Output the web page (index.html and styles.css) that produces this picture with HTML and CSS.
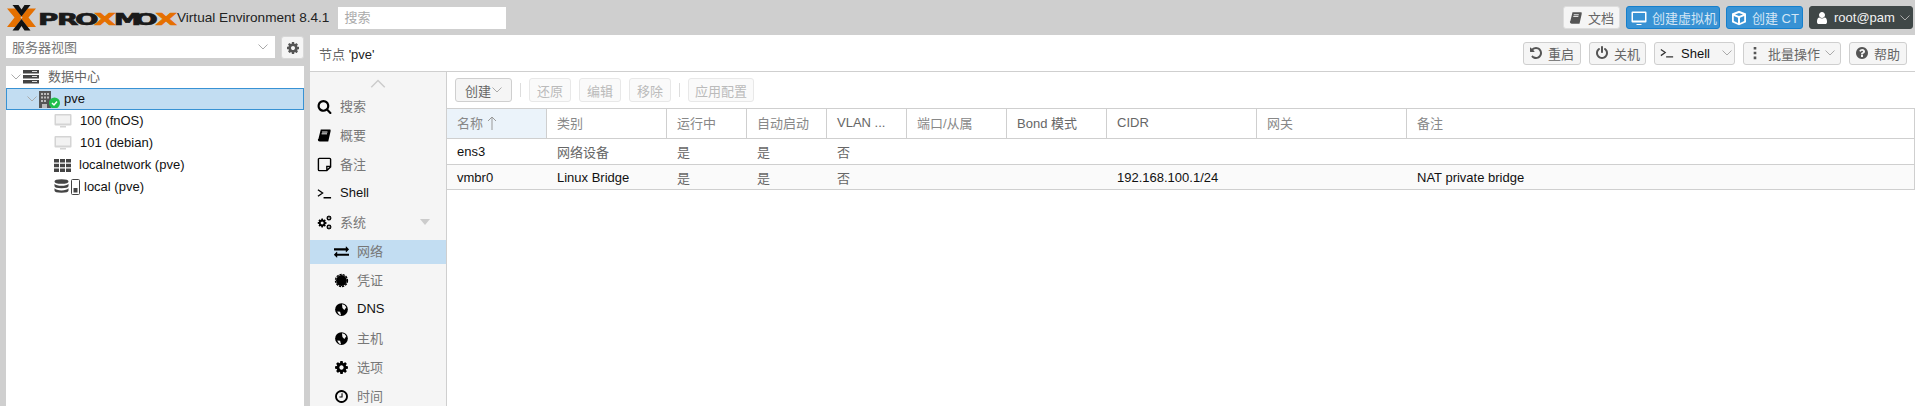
FILE: index.html
```html
<!DOCTYPE html>
<html lang="zh">
<head>
  <meta charset="UTF-8">
  <meta name="viewport" content="width=device-width, initial-scale=1.0">
  <title>pve - Proxmox Virtual Environment</title>
  <link rel="stylesheet" href="styles.css">
</head>
<body>

  <!-- icon sprite -->
  <svg class="sprite" xmlns="http://www.w3.org/2000/svg">
    <symbol id="i-search" viewBox="0 0 1792 1792"><path d="M1216 832q0-185-131.500-316.500t-316.500-131.500-316.500 131.500-131.500 316.500 131.500 316.500 316.500 131.500 316.500-131.500 131.500-316.500zm512 832q0 52-38 90t-90 38q-54 0-90-38l-343-342q-179 124-399 124-143 0-273.500-55.500t-225-150-150-225-55.500-273.500 55.500-273.500 150-225 225-150 273.500-55.500 273.500 55.500 225 150 150 225 55.500 273.500q0 220-124 399l343 343q37 37 37 90z"/></symbol>
    <symbol id="i-power" viewBox="0 0 1792 1792"><path d="M1664 896q0 156-61 298t-164 245-245 164-298 61-298-61-245-164-164-245-61-298q0-182 80.500-343t226.500-270q43-32 95.500-25t83.500 50q32 42 24.500 94.500t-49.500 84.500q-98 74-151.500 181t-53.500 228q0 104 40.500 198.500t109.500 163.500 163.500 109.500 198.500 40.500 198.500-40.500 163.500-109.500 109.500-163.500 40.500-198.500q0-121-53.500-228t-151.500-181q-42-32-49.500-84.500t24.500-94.500q31-43 84-50t95 25q146 109 226.500 270t80.500 343zm-640-768v640q0 52-38 90t-90 38-90-38-38-90v-640q0-52 38-90t90-38 90 38 38 90z"/></symbol>
    <symbol id="i-undo" viewBox="0 0 1792 1792"><path d="M1664 896q0 156-61 298t-164 245-245 164-298 61q-172 0-327-72.500t-264-204.500q-7-10-6.500-22.500t8.500-20.500l137-138q10-9 25-9 16 2 23 12 73 95 179 147t225 52q104 0 198.500-40.500t163.500-109.500 109.500-163.500 40.500-198.500-40.500-198.500-109.500-163.500-163.500-109.500-198.500-40.500q-98 0-188 35.500t-160 101.500l137 138q31 30 14 69-17 40-59 40h-448q-26 0-45-19t-19-45v-448q0-42 40-59 39-17 69 14l130 129q107-101 244.500-156.500t284.500-55.500q156 0 298 61t245 164 164 245 61 298z"/></symbol>
    <symbol id="i-help" viewBox="0 0 1792 1792"><path d="M1024 1376v-192q0-14-9-23t-23-9h-192q-14 0-23 9t-9 23v192q0 14 9 23t23 9h192q14 0 23-9t9-23zm256-672q0-88-55.500-163t-138.500-116-170-41q-243 0-371 213-15 24 8 42l132 100q7 6 19 6 16 0 25-12 53-68 86-92 34-24 86-24 48 0 85.500 26t37.500 59q0 38-20 61t-68 45q-63 28-115.500 86.500t-52.500 125.500v36q0 14 9 23t23 9h192q14 0 23-9t9-23q0-19 21.500-49.500t54.500-49.500q32-18 49-28.500t46-35 44.500-48 28-60.500 12.500-81zm384 192q0 209-103 385.500t-279.500 279.500-385.500 103-385.500-103-279.500-279.500-103-385.500 103-385.500 279.500-279.500 385.500-103 385.500 103 279.500 279.500 103 385.500z"/></symbol>
    <symbol id="i-user" viewBox="0 0 1792 1792"><path d="M1536 1399q0 109-62.500 187t-150.500 78h-854q-88 0-150.500-78t-62.500-187q0-85 8.500-160.500t31.500-152 58.500-131 94-89 134.500-34.500q131 128 313 128t313-128q76 0 134.500 34.500t94 89 58.500 131 31.500 152 8.500 160.500zm-256-887q0 159-112.500 271.500t-271.500 112.500-271.500-112.500-112.500-271.500 112.500-271.500 271.500-112.500 271.500 112.500 112.500 271.500z"/></symbol>
    <symbol id="i-gear" viewBox="0 0 1792 1792"><path d="M1152 896q0-106-75-181t-181-75-181 75-75 181 75 181 181 75 181-75 75-181zm512-109v222q0 12-8 23t-20 13l-185 28q-19 54-39 91 35 50 107 138 10 12 10 25t-9 23q-27 37-99 108t-94 71q-12 0-26-9l-138-108q-44 23-91 38-16 136-29 186-7 28-36 28h-222q-14 0-24.500-8.500t-11.500-21.500l-28-184q-49-16-90-37l-141 107q-10 9-25 9-14 0-25-11-126-114-165-168-7-10-7-23 0-12 8-23 15-21 51-66.500t54-70.500q-27-50-41-99l-183-27q-13-2-21-12.500t-8-23.500v-222q0-12 8-23t19-13l186-28q14-46 39-92-40-57-107-138-10-12-10-24 0-10 9-23 26-36 98.500-107.500t94.500-71.500q13 0 26 10l138 107q44-23 91-38 16-136 29-186 7-28 36-28h222q14 0 24.500 8.500t11.500 21.500l28 184q49 16 90 37l142-107q9-9 24-9 13 0 25 10 129 119 165 170 7 8 7 22 0 12-8 23-15 21-51 66.500t-54 70.500q26 50 41 98l183 28q13 2 21 12.500t8 23.500z"/></symbol>
    <symbol id="i-clock" viewBox="0 0 1792 1792"><path d="M1024 544v448q0 14-9 23t-23 9h-320q-14 0-23-9t-9-23v-64q0-14 9-23t23-9h224v-352q0-14 9-23t23-9h64q14 0 23 9t9 23zm416 352q0-148-73-273t-198-198-273-73-273 73-198 198-73 273 73 273 198 198 273 73 273-73 198-198 73-273zm224 0q0 209-103 385.500t-279.500 279.500-385.500 103-385.500-103-279.500-279.500-103-385.500 103-385.500 279.500-279.500 385.500-103 385.500 103 279.500 279.500 103 385.500z"/></symbol>
    <symbol id="i-exchange" viewBox="0 0 1792 1792"><path d="M1792 1184v192q0 13-9.500 22.500t-22.500 9.500h-1376v192q0 13-9.500 22.500t-22.500 9.500q-12 0-24-10l-319-320q-9-9-9-22 0-14 9-23l320-320q9-9 23-9 13 0 22.500 9.500t9.500 22.500v192h1376q13 0 22.500 9.500t9.500 22.500zm0-544q0 14-9 23l-320 320q-9 9-23 9-13 0-22.500-9.500t-9.500-22.500v-192h-1376q-13 0-22.500-9.500t-9.500-22.500v-192q0-13 9.500-22.500t22.500-9.500h1376v-192q0-14 9-23t23-9q12 0 24 10l319 319q9 9 9 23z"/></symbol>
    <symbol id="i-book" viewBox="0 0 16 16"><path d="M4 1.500h10.500l-.5 1-2.700 10.500H2.600q-1.200 0-1.100-1.300zM3.200 11.300q-.5.800.2 1H11l2.600-9.800.9-.5v1.500L12 14.500H3q-2.300 0-2-2.700z"/><path d="M5.400 4.300h5.800M4.900 6.200h5.800" stroke="#fff" fill="none"/></symbol>
    <symbol id="i-note" viewBox="0 0 16 16"><path d="M2.500 1.500h11a1 1 0 0 1 1 1v8l-4 4h-8a1 1 0 0 1-1-1v-11a1 1 0 0 1 1-1zM14.500 10h-4v4.500" fill="none" stroke="currentColor" stroke-width="1.500"/></symbol>
    <symbol id="i-terminal" viewBox="0 0 16 16"><path d="M1 4l5 3.500-5 3.500M7 12.500h8" fill="none" stroke="currentColor" stroke-width="1.400"/></symbol>
    <symbol id="i-cert" viewBox="0 0 16 16"><circle cx="8" cy="8" r="5.800"/><circle cx="8" cy="8" r="6.400" fill="none" stroke="currentColor" stroke-width="1.400" stroke-dasharray="2.400 1"/></symbol>
    <symbol id="i-globe" viewBox="0 0 16 16"><circle cx="8" cy="8" r="6.800"/><path d="M8.500 2.500q3 .2 4.600 3L11 8.500 9 6.500zM3.500 10l3 .5 1 3.500q-2.500-.2-4-4z" fill="#f5f5f5"/></symbol>
    <symbol id="i-cogs" viewBox="0 0 16 16"><use href="#i-gear" x="0" y="3" width="11" height="11"/><use href="#i-gear" x="9.500" y="0" width="6.500" height="6.500"/><use href="#i-gear" x="9.500" y="9.500" width="6.500" height="6.500"/></symbol>
    <symbol id="i-desktop" viewBox="0 0 16 16"><path d="M1.500 1.500h13a1 1 0 0 1 1 1v9a1 1 0 0 1-1 1h-13a1 1 0 0 1-1-1v-9a1 1 0 0 1 1-1zM5.500 14h5v1h-5zM2 3v7.500h12V3z" fill-rule="evenodd"/></symbol>
    <symbol id="i-vm" viewBox="0 0 18 16"><path d="M1.500 1h15a1 1 0 0 1 1 1v9.500a1 1 0 0 1-1 1h-15a1 1 0 0 1-1-1V2a1 1 0 0 1 1-1zM6 13h6v1.500H6z" fill="#d4d4d4"/><path d="M2 2.500h14v8H2z" fill="#f2f2f2"/></symbol>
    <symbol id="i-cube" viewBox="0 0 16 16"><path d="M8 .8l7 2.700v8.700l-7 3-7-3V3.500z"/><path d="M8 3l4 1.500L8 6 4 4.500zM2.800 6l4.200 1.700v5.200L2.800 11zM13.200 6L9 7.700v5.200l4.200-1.900z" fill="#3892d4"/></symbol>
    <symbol id="i-bars" viewBox="0 0 4 16"><path d="M.5 1h3v3h-3zM.5 6.500h3v3h-3zM.5 12h3v3h-3z"/></symbol>
    <symbol id="i-chev" viewBox="0 0 10 6"><path d="M.5.500L5 5l4.500-4.500" fill="none" stroke="currentColor"/></symbol>
    <symbol id="i-up" viewBox="0 0 10 14"><path d="M5 1v13M1 5l4-4 4 4" fill="none" stroke="currentColor"/></symbol>
    <symbol id="i-server" viewBox="0 0 16 14"><path d="M0 0h16v3.500H0zM0 5h16v3.500H0zM0 10h16v3.500H0z" fill="#444"/><path d="M9 1.500h5M9 6.500h5M9 11.500h5" stroke="#ddd"/></symbol>
    <symbol id="i-node" viewBox="0 0 21 17"><path d="M0 0h12v17H0z" fill="#555"/><path d="M2 2h2v2H2zM5 2h2v2H5zM8 2h2v2H8zM2 5.500h2v2H2zM5 5.500h2v2H5zM8 5.500h2v2H8zM2 9h2v2H2zM5 9h2v2H5zM3 13h5v4H3z" fill="#bbb"/><circle cx="15.500" cy="12" r="5.500" fill="#21bf4b"/><path d="M13 12l2 2 3-3.500" fill="none" stroke="#fff" stroke-width="1.500"/></symbol>
    <symbol id="i-grid" viewBox="0 0 17 13"><path d="M0 0h5v3.500H0zM6 0h5v3.500H6zM12 0h5v3.500h-5zM0 4.700h5v3.500H0zM6 4.700h5v3.500H6zM12 4.700h5v3.500h-5zM0 9.400h5V13H0zM6 9.400h5V13H6zM12 9.400h5V13h-5z" fill="#444"/></symbol>
    <symbol id="i-storage" viewBox="0 0 26 16"><path d="M.5 2.500Q.5.200 7.500.200t7 2.300-7 2.300-7-2.300zM.5 4.700q2 2.100 7 2.100t7-2.100V7q0 2.200-7 2.200T.5 7zM.5 9.300q2 2.100 7 2.100t7-2.100v2.300q0 2.200-7 2.200t-7-2.200z" fill="#444"/><path d="M18.500.500h6a1 1 0 0 1 1 1v13a1 1 0 0 1-1 1h-6a1 1 0 0 1-1-1v-13a1 1 0 0 1 1-1z" fill="#fff" stroke="#444"/><path d="M19.500 9h4v4.500h-4z" fill="#444"/></symbol>
  </svg>

  <header class="topbar">
    <svg class="logo" viewBox="6 4 171 27" xmlns="http://www.w3.org/2000/svg">
      <path d="M7 8.500h8.500l7 9-7 9.500H7l7.500-9.500zM36 8.500h-8.500l-7 9 7 9.500H36l-7.500-9.500z" fill="#e57000"/>
      <path d="M12.500 5h6l3 4.500 3-4.500h6l-9 11.500zM12.500 30.500h6l3-4.500 3 4.500h6l-9-11.500z" fill="#111"/>
      <text transform="scale(1.85 1)" y="25" x="20.500 30.800 40.600 51 61.500 72.600 84" fill="#1a1a1a" stroke="#1a1a1a" stroke-width=".6" font-family="'DejaVu Sans', sans-serif" font-weight="700" font-size="15">PRO<tspan fill="#e57000" stroke="#e57000">X</tspan>MO<tspan fill="#e57000" stroke="#e57000">X</tspan></text>
    </svg>
    <span class="version">Virtual Environment 8.4.1</span>
    <input class="global-search" type="text" placeholder="搜索">
    <div class="top-actions">
      <button class="btn btn-docs"><svg class="ico ico-gray"><use href="#i-book"/></svg>文档</button>
      <button class="btn btn-blue btn-vm"><svg class="ico"><use href="#i-desktop"/></svg>创建虚拟机</button>
      <button class="btn btn-blue btn-ct"><svg class="ico"><use href="#i-cube"/></svg>创建 CT</button>
      <button class="btn btn-user"><svg class="ico"><use href="#i-user"/></svg>root@pam<svg class="chev"><use href="#i-chev"/></svg></button>
    </div>
  </header>

  <div class="workspace">
    <aside class="left">
      <div class="view-row">
        <div class="view-select">服务器视图<svg class="chev"><use href="#i-chev"/></svg></div>
        <button class="gear-btn"><svg class="ico ico-gray"><use href="#i-gear"/></svg></button>
      </div>
      <div class="tree">
        <div class="tree-row lvl0"><svg class="chev"><use href="#i-chev"/></svg><svg class="t-server"><use href="#i-server"/></svg><span class="dc-name">数据中心</span></div>
        <div class="tree-row lvl1 selected"><svg class="chev"><use href="#i-chev"/></svg><svg class="t-node"><use href="#i-node"/></svg><span class="node-name">pve</span></div>
        <div class="tree-row lvl2"><svg class="t-vm"><use href="#i-vm"/></svg>100 (fnOS)</div>
        <div class="tree-row lvl2"><svg class="t-vm"><use href="#i-vm"/></svg>101 (debian)</div>
        <div class="tree-row lvl2"><svg class="t-grid"><use href="#i-grid"/></svg>localnetwork (pve)</div>
        <div class="tree-row lvl2"><svg class="t-storage"><use href="#i-storage"/></svg>local (pve)</div>
      </div>
    </aside>

    <main class="main">
      <div class="page-head">
        <div class="page-title">节点 <span class="page-node">'pve'</span></div>
        <div class="page-actions">
          <button class="btn btn-reboot"><svg class="ico ico-gray"><use href="#i-undo"/></svg>重启</button>
          <button class="btn btn-off"><svg class="ico ico-gray"><use href="#i-power"/></svg>关机</button>
          <button class="btn btn-shell"><svg class="ico"><use href="#i-terminal"/></svg><span class="shell-label">Shell</span><i class="split"></i><svg class="chev"><use href="#i-chev"/></svg></button>
          <button class="btn btn-bulk"><svg class="ico-bars"><use href="#i-bars"/></svg>批量操作<svg class="chev"><use href="#i-chev"/></svg></button>
          <button class="btn btn-help"><svg class="ico ico-gray"><use href="#i-help"/></svg>帮助</button>
        </div>
      </div>

      <div class="page-body">
        <nav class="side">
          <div class="side-up"><svg class="chev-up"><use href="#i-chev"/></svg></div>
          <a class="nav-item"><svg class="ico"><use href="#i-search"/></svg>搜索</a>
          <a class="nav-item"><svg class="ico"><use href="#i-book"/></svg>概要</a>
          <a class="nav-item"><svg class="ico"><use href="#i-note"/></svg>备注</a>
          <a class="nav-item latin"><svg class="ico"><use href="#i-terminal"/></svg>Shell</a>
          <a class="nav-item"><svg class="ico"><use href="#i-cogs"/></svg>系统<i class="tri"></i></a>
          <a class="nav-item sub active"><svg class="ico"><use href="#i-exchange"/></svg>网络</a>
          <a class="nav-item sub"><svg class="ico"><use href="#i-cert"/></svg>凭证</a>
          <a class="nav-item sub latin"><svg class="ico"><use href="#i-globe"/></svg>DNS</a>
          <a class="nav-item sub"><svg class="ico"><use href="#i-globe"/></svg>主机</a>
          <a class="nav-item sub"><svg class="ico"><use href="#i-gear"/></svg>选项</a>
          <a class="nav-item sub"><svg class="ico"><use href="#i-clock"/></svg>时间</a>
        </nav>

        <section class="panel">
          <div class="toolbar">
            <button class="tbtn tbtn-on">创建<svg class="chev"><use href="#i-chev"/></svg></button>
            <i class="tsep"></i>
            <button class="tbtn" disabled>还原</button>
            <button class="tbtn" disabled>编辑</button>
            <button class="tbtn" disabled>移除</button>
            <i class="tsep"></i>
            <button class="tbtn tbtn-wide" disabled>应用配置</button>
          </div>

          <table class="grid">
            <colgroup>
              <col class="c-100"><col class="c-120"><col class="c-80"><col class="c-80"><col class="c-80"><col class="c-100"><col class="c-100"><col class="c-150"><col class="c-150"><col>
            </colgroup>
            <thead>
              <tr>
                <th class="sorted">名称 <svg class="sort-up"><use href="#i-up"/></svg></th>
                <th>类别</th>
                <th>运行中</th>
                <th>自动启动</th>
                <th class="latin-th">VLAN ...</th>
                <th>端口/从属</th>
                <th class="latin-th">Bond 模式</th>
                <th class="latin-th">CIDR</th>
                <th>网关</th>
                <th>备注</th>
              </tr>
            </thead>
            <tbody>
              <tr class="first">
                <td>ens3</td><td class="cjk">网络设备</td><td class="cjk">是</td><td class="cjk">是</td><td class="cjk">否</td><td></td><td></td><td></td><td></td><td></td>
              </tr>
              <tr class="alt">
                <td>vmbr0</td><td>Linux Bridge</td><td class="cjk">是</td><td class="cjk">是</td><td class="cjk">否</td><td></td><td></td><td>192.168.100.1/24</td><td></td><td>NAT private bridge</td>
              </tr>
            </tbody>
          </table>
        </section>
      </div>
    </main>
  </div>

</body>
</html>
```

FILE: styles.css
```css
* {
  box-sizing: border-box;
}

html, body {
  height: 100%;
}

body {
  margin: 0;
  font-family: 'Liberation Sans', 'Noto Sans CJK SC', sans-serif;
  font-size: 13px;
  color: #111;
  background-color: #cfcfcf;
  overflow: hidden;
  display: flex;
  flex-direction: column;
}

.sprite {
  display: none;
}

svg {
  fill: currentColor;
  flex: none;
}

.chev {
  width: 10px;
  height: 6px;
  color: #aaa;
}

/* top bar */
.topbar {
  height: 35px;
  flex: none;
  display: flex;
  align-items: center;
  padding: 0 2px 0 6px;
}

.logo {
  width: 171px;
  height: 27px;
}

.version {
  margin-left: 0;
  color: #222;
  font-size: 13.6px;
  white-space: nowrap;
}

.global-search {
  width: 168px;
  height: 22px;
  margin-left: 9px;
  padding: 0 6px;
  border: none;
  background-color: #fff;
  font: inherit;
}

.global-search::placeholder {
  color: #aaa;
}

.top-actions {
  margin-left: auto;
  display: flex;
  gap: 6px;
}

/* buttons */
.btn {
  height: 23px;
  display: flex;
  align-items: center;
  gap: 5px;
  padding: 0 5px;
  font: inherit;
  color: #666;
  background-color: #f5f5f5;
  border: 1px solid #cfcfcf;
  border-radius: 3px;
  white-space: nowrap;
}

.ico {
  width: 14px;
  height: 14px;
}

.ico-gray {
  color: #555;
}

.btn-docs {
  width: 57px;
  border-color: #ddd;
}

.btn-blue {
  color: #d4e6f5;
  background-color: #3892d4;
  border-color: #157fcc;
}

.btn-blue .ico {
  color: #fff;
  width: 16px;
  height: 16px;
}

.btn-vm {
  width: 94px;
  padding: 0 3px 0 4px;
}

.btn-ct {
  width: 77px;
  padding: 0 4px;
}

.btn-user {
  width: 104px;
  color: #f2f2f2;
  background-color: #3f4747;
  border-color: #3f4747;
  padding: 0 7px 0 5px;
  justify-content: space-between;
}

.btn-user .ico {
  color: #fff;
}

/* left column */
.workspace {
  flex: 1;
  display: flex;
  min-height: 0;
}

.left {
  width: 310px;
  flex: none;
  padding: 1px 6px 0;
  display: flex;
  flex-direction: column;
  gap: 7px;
}

.view-row {
  display: flex;
  justify-content: space-between;
}

.view-select {
  width: 269px;
  height: 22px;
  display: flex;
  align-items: center;
  justify-content: space-between;
  padding: 0 7px 1px 6px;
  background-color: #fff;
  color: #777;
}

.gear-btn {
  width: 23px;
  height: 23px;
  padding: 0;
  display: flex;
  align-items: center;
  justify-content: center;
  background-color: #f5f5f5;
  border: 1px solid #d8d8d8;
  border-radius: 3px;
}

.tree {
  flex: 1;
  background-color: #fff;
}

.tree-row {
  height: 22px;
  display: flex;
  align-items: center;
  padding-bottom: 2px;
  white-space: nowrap;
}

.tree-row svg {
  margin-top: 2px;
}

.lvl0 {
  padding-left: 5px;
}

.lvl1 {
  padding-left: 21px;
}

.lvl2 {
  padding-left: 48px;
}

.selected {
  background-color: #c2ddf2;
  outline: 1px solid #3892d4;
  outline-offset: -1px;
}

.t-server {
  width: 16px;
  height: 14px;
  margin-left: 2px;
}

.dc-name {
  margin-left: 9px;
  margin-bottom: 2px;
  color: #666;
}

.t-node {
  width: 21px;
  height: 17px;
  margin-left: 2px;
}

.node-name {
  margin-left: 4px;
}

.t-vm {
  width: 18px;
  height: 16px;
  margin-right: 8px;
}

.t-grid {
  width: 17px;
  height: 13px;
  margin-right: 8px;
}

.t-storage {
  width: 26px;
  height: 16px;
  margin-right: 4px;
}

/* main */
.main {
  flex: 1;
  min-width: 0;
  display: flex;
  flex-direction: column;
  background-color: #fff;
}

.page-head {
  height: 37px;
  flex: none;
  display: flex;
  align-items: center;
  justify-content: space-between;
  padding: 0 8px 0 9px;
  border-bottom: 1px solid #cfcfcf;
}

.page-title {
  color: #666;
}

.page-node {
  color: #222;
}

.page-actions {
  display: flex;
  gap: 8px;
}

.btn-reboot {
  width: 58px;
}

.btn-off {
  width: 57px;
}

.btn-shell {
  width: 81px;
  gap: 0;
  padding: 0 5px;
}

.btn-shell .ico {
  color: #333;
}

.shell-label {
  margin-left: 7px;
  color: #111;
}

.split {
  width: 1px;
  height: 14px;
  margin: 0 6px;
  background-color: #cfcfcf;
}

.btn-bulk {
  width: 98px;
  padding: 0 7px 0 9px;
  justify-content: space-between;
}

.ico-bars {
  width: 4px;
  height: 14px;
  color: #555;
  margin-right: 6px;
}

.btn-help {
  width: 58px;
}

.page-body {
  flex: 1;
  display: flex;
  min-height: 0;
}

/* side nav */
.side {
  width: 137px;
  flex: none;
  background-color: #f5f5f5;
  border-right: 1px solid #cfcfcf;
  overflow: hidden;
}

.side-up {
  height: 23px;
  display: flex;
  align-items: center;
  justify-content: center;
}

.chev-up {
  width: 16px;
  height: 9px;
  color: #ccc;
  transform: rotate(180deg);
}

.nav-item {
  height: 24px;
  margin-bottom: 5px;
  display: flex;
  align-items: center;
  gap: 8px;
  padding-left: 7px;
  padding-bottom: 3px;
  color: #777;
}

.nav-item .ico {
  width: 15px;
  height: 15px;
  margin-top: 2px;
  color: #000;
}

.latin {
  color: #111;
}

.sub {
  padding-left: 24px;
}

.active {
  background-color: #c2ddf2;
}

.tri {
  width: 0;
  height: 0;
  margin-left: 46px;
  border-left: 5px solid transparent;
  border-right: 5px solid transparent;
  border-top: 6px solid #ccc;
}

/* network panel */
.panel {
  flex: 1;
  min-width: 0;
}

.toolbar {
  height: 36px;
  display: flex;
  align-items: center;
  gap: 8px;
  padding-left: 8px;
}

.tbtn {
  width: 42px;
  height: 24px;
  display: flex;
  align-items: center;
  justify-content: center;
  padding: 0;
  font: inherit;
  color: #bbb;
  background-color: #fafafa;
  border: 1px solid #e8e8e8;
  border-radius: 3px;
}

.tbtn-wide {
  width: 66px;
}

.tbtn-on {
  width: 57px;
  justify-content: space-between;
  padding: 0 9px;
  color: #666;
  background-color: #f5f5f5;
  border-color: #cfcfcf;
}

.tsep {
  width: 1px;
  height: 14px;
  background-color: #ddd;
}

.grid {
  width: 100%;
  table-layout: fixed;
  border-collapse: separate;
  border-spacing: 0;
  border-top: 1px solid #cfcfcf;
  border-right: 1px solid #cfcfcf;
}

.c-80 { width: 80px; }
.c-100 { width: 100px; }
.c-120 { width: 120px; }
.c-150 { width: 150px; }

.grid th {
  height: 30px;
  padding: 0 10px 2px;
  text-align: left;
  font-weight: normal;
  color: #888;
  white-space: nowrap;
  border-right: 1px solid #cfcfcf;
  border-bottom: 1px solid #cfcfcf;
}

.grid th:last-child {
  border-right: none;
}

.grid th.latin-th {
  color: #666;
}

.grid th.sorted {
  background-color: #ebf3fa;
}

.sort-up {
  width: 10px;
  height: 14px;
  color: #999;
  vertical-align: -2px;
}

.grid td {
  height: 25px;
  padding: 0 10px;
  white-space: nowrap;
  border-bottom: 1px solid #cfcfcf;
}

.first td {
  height: 26px;
}

.grid td.cjk {
  color: #666;
}

.alt td {
  background-color: #fafafa;
}
```
